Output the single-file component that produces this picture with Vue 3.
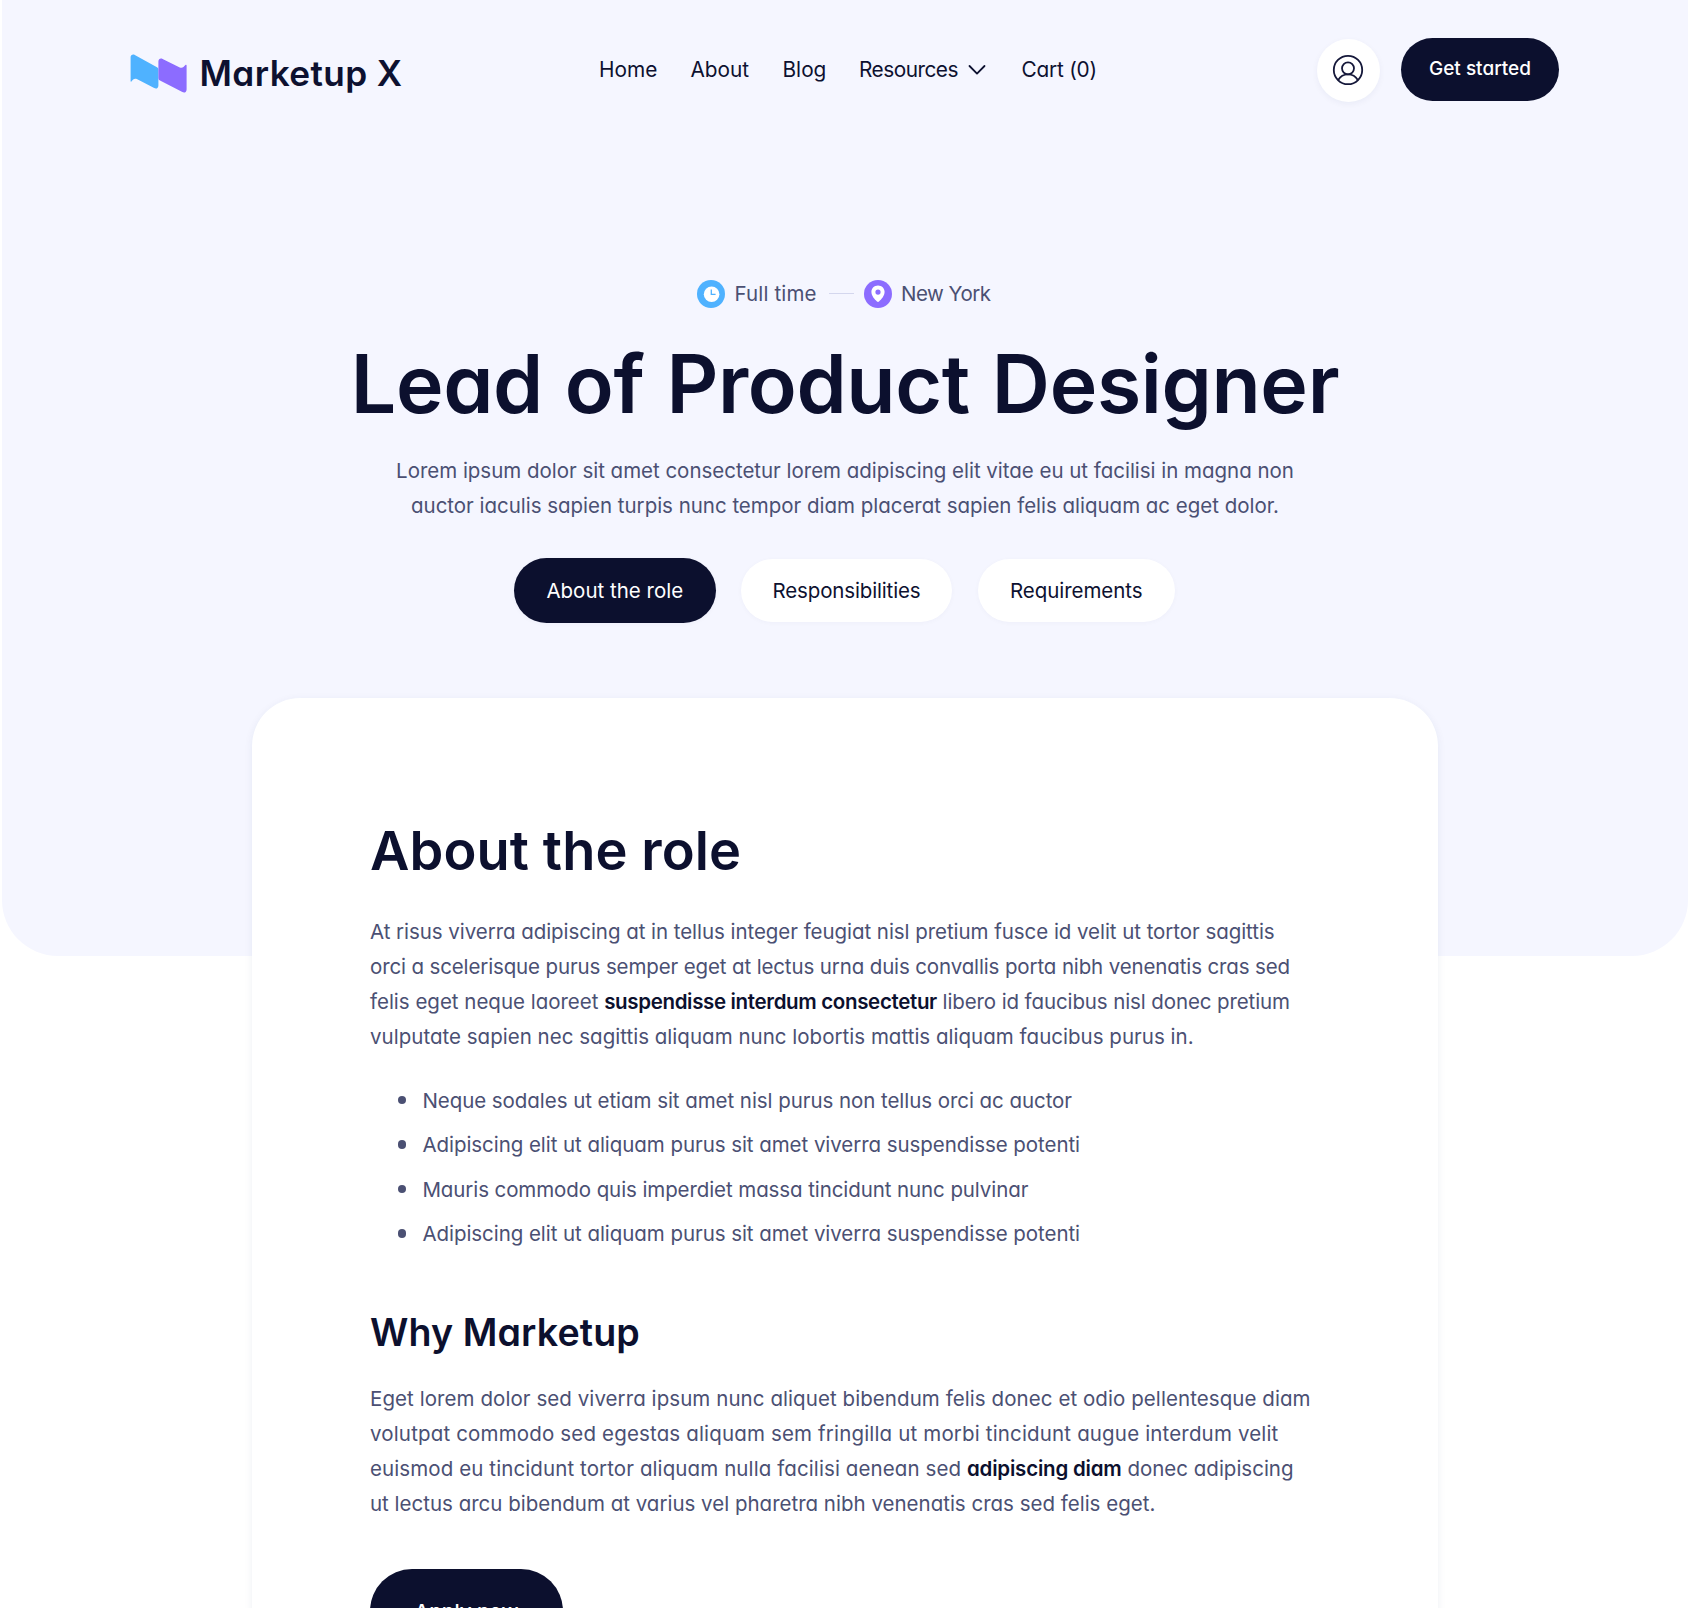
<script setup>
const nav = [
  { label: 'Home', cls: 'home' },
  { label: 'About', cls: 'about' },
  { label: 'Blog', cls: 'blog' },
  { label: 'Resources', cls: 'resources', menu: true },
  { label: 'Cart (0)', cls: 'cart' },
]

const tabs = [
  { label: 'About the role', cls: 'active' },
  { label: 'Responsibilities', cls: 'resp' },
  { label: 'Requirements', cls: 'req' },
]

// Each line is a list of runs; `ls` is the tracking in pixels.
const intro = [
  [{ t: 'At risus viverra adipiscing at in tellus integer feugiat nisl pretium fusce id velit ut tortor sagittis', ls: -0.05 }],
  [{ t: 'orci a scelerisque purus semper eget at lectus urna duis convallis porta nibh venenatis cras sed', ls: -0.13 }],
  [
    { t: 'felis eget neque laoreet ', ls: -0.01 },
    { t: 'suspendisse interdum consectetur', b: true, ls: -0.34 },
    { t: ' libero id faucibus nisl donec pretium', ls: -0.11 },
  ],
  [{ t: 'vulputate sapien nec sagittis aliquam nunc lobortis mattis aliquam faucibus purus in.', ls: 0.02 }],
]

const points = [
  { t: 'Neque sodales ut etiam sit amet nisl purus non tellus orci ac auctor', ls: -0.055 },
  { t: 'Adipiscing elit ut aliquam purus sit amet viverra suspendisse potenti', ls: -0.055 },
  { t: 'Mauris commodo quis imperdiet massa tincidunt nunc pulvinar', ls: -0.09 },
  { t: 'Adipiscing elit ut aliquam purus sit amet viverra suspendisse potenti', ls: -0.055 },
]

const why = [
  [{ t: 'Eget lorem dolor sed viverra ipsum nunc aliquet bibendum felis donec et odio pellentesque diam', ls: 0.07 }],
  [{ t: 'volutpat commodo sed egestas aliquam sem fringilla ut morbi tincidunt augue interdum velit', ls: 0.16 }],
  [
    { t: 'euismod eu tincidunt tortor aliquam nulla facilisi aenean sed ', ls: 0.1 },
    { t: 'adipiscing diam', b: true, ls: -0.2 },
    { t: ' donec adipiscing', ls: 0 },
  ],
  [{ t: 'ut lectus arcu bibendum at varius vel pharetra nibh venenatis cras sed felis eget.', ls: 0 }],
]
</script>

<template>
  <div class="page">
    <section class="hero">
      <header class="header">
        <a class="logo">
          <svg width="57" height="40" viewBox="0 0 57 40">
            <path fill="#4fb2ff" d="M0.6 3.2C0.6 1 2.8 0 4.8 1L27 13.2C28 13.8 28.4 14.6 28.4 15.8V31.4C28.4 34 26.4 35.2 24.2 34.1L6.8 25.1C4.5 24 2.8 25.5 1.4 27.4C1 28 0.6 27.8 0.6 27.1Z" />
            <path fill="#8c6cff" d="M28.4 7.4C28.4 4.8 30.6 3.8 32.6 4.9L49.8 13.4C52.2 14.6 53.7 13 55.4 11C56 10.4 56.6 10.6 56.6 11.4V35.4C56.6 38 54.5 39.3 52.4 38.1L30 26.6C28.9 26 28.4 25.2 28.4 24Z" />
          </svg>
          <span>Marketup X</span>
        </a>
        <nav class="nav">
          <a v-for="n in nav" :key="n.label" :class="n.cls">
            {{ n.label }}
            <svg v-if="n.menu" width="18" height="12" viewBox="0 0 18 12">
              <path d="M1.5 2L9 9.6L16.5 2" fill="none" stroke="#0d1130" stroke-width="1.8" stroke-linecap="round" stroke-linejoin="round" />
            </svg>
          </a>
        </nav>
        <div class="actions">
          <a class="user">
            <svg width="32" height="32" viewBox="0 0 32 32" fill="none" stroke="#15183a" stroke-width="1.8">
              <circle cx="16" cy="16" r="14.2" />
              <circle cx="16" cy="14.3" r="6" />
              <path d="M6.2 26C8.2 22.4 11.8 20.3 16 20.3S23.8 22.4 25.8 26" />
            </svg>
          </a>
          <a class="start">Get started</a>
        </div>
      </header>

      <div class="meta">
        <svg width="28" height="28" viewBox="0 0 28 28">
          <circle cx="14" cy="14" r="14" fill="#4fb2ff" />
          <circle cx="14.6" cy="14.2" r="7.8" fill="#fff" />
          <path d="M14.3 9.6V14.3H18.6" fill="none" stroke="#4fb2ff" stroke-width="1.3" />
        </svg>
        <span class="full">Full time</span>
        <i class="dash"></i>
        <svg width="28" height="28" viewBox="0 0 28 28">
          <circle cx="14" cy="14" r="14" fill="#8c6cff" />
          <path fill="#fff" fill-rule="evenodd" d="M14 5.4C10.2 5.4 7.4 8.2 7.4 11.8C7.4 16 10.7 19.4 13 21.5C13.6 22.1 14.4 22.1 15 21.5C17.3 19.4 20.6 16 20.6 11.8C20.6 8.2 17.8 5.4 14 5.4ZM14 14.7A2.6 2.6 0 1 1 14 9.5A2.6 2.6 0 0 1 14 14.7Z" />
        </svg>
        <span class="city">New York</span>
      </div>

      <h1>Lead of Product Designer</h1>
      <p class="lead">
        Lorem ipsum dolor sit amet consectetur lorem adipiscing elit vitae eu ut facilisi in magna non<br />
        auctor iaculis sapien turpis nunc tempor diam placerat sapien felis aliquam ac eget dolor.
      </p>

      <div class="tabs">
        <a v-for="t in tabs" :key="t.label" class="tab" :class="t.cls">{{ t.label }}</a>
      </div>
    </section>

    <article class="card">
      <h2>About the role</h2>
      <p>
        <span v-for="(line, i) in intro" :key="i" class="line"><component
          :is="r.b ? 'strong' : 'span'" v-for="(r, j) in line" :key="j"
          :style="{ letterSpacing: r.ls + 'px' }">{{ r.t }}</component></span>
      </p>
      <ul>
        <li v-for="(p, i) in points" :key="i" :style="{ letterSpacing: p.ls + 'px' }">{{ p.t }}</li>
      </ul>
      <h3>Why Marketup</h3>
      <p>
        <span v-for="(line, i) in why" :key="i" class="line"><component
          :is="r.b ? 'strong' : 'span'" v-for="(r, j) in line" :key="j"
          :style="{ letterSpacing: r.ls + 'px' }">{{ r.t }}</component></span>
      </p>
      <a class="apply">Apply now</a>
    </article>
  </div>
</template>

<style>
body {
  background: #fff;
}
</style>

<style scoped>
.page {
  box-sizing: border-box;
  height: 1608px;
  overflow: hidden;
  padding-left: 2px;
  font-family: Inter, 'Liberation Sans', sans-serif;
  font-feature-settings: 'cv11';
  font-size: 20.5px;
  line-height: 35.15px;
  color: #4b5073;
}
h1, h2, h3, p, ul {
  margin: 0;
  padding: 0;
}
.hero {
  height: 955.5px;
  border-radius: 0 0 56px 56px;
  background: #f5f6ff;
}
.header {
  display: flex;
  align-items: center;
  height: 139px;
  padding: 0 129px 0 128px;
  color: #0d1130;
}
.logo {
  display: flex;
  align-items: center;
  width: 467px;
  font-size: 35.2px;
  font-weight: 600;
  letter-spacing: 0.4px;
}
.logo svg {
  margin: 8px 12.5px 0 0;
}
.logo span {
  margin-top: 8px;
}
.nav {
  display: flex;
  flex: 1;
  font-size: 20.8px;
}
.nav a {
  white-space: nowrap;
}
.nav .home { margin-left: 2px; width: 91.5px; }
.nav .about { width: 92px; }
.nav .blog { width: 76.5px; }
.nav .resources {
  display: flex;
  align-items: center;
  width: 162.5px;
  letter-spacing: -0.5px;
}
.nav .resources svg {
  margin-left: 10px;
}
.nav .cart { letter-spacing: -0.2px; }
.actions {
  display: flex;
  align-items: center;
  gap: 21.5px;
}
.user {
  display: flex;
  align-items: center;
  justify-content: center;
  width: 63px;
  height: 63px;
  margin-top: 1px;
  border-radius: 50%;
  background: #fff;
  box-shadow: 0 2px 6px rgba(20, 30, 90, 0.05);
}
.start {
  box-sizing: border-box;
  width: 158px;
  height: 63px;
  border-radius: 32px;
  background: #0c102e;
  color: #fff;
  font-size: 19px;
  font-weight: 500;
  line-height: 62.5px;
  text-align: center;
}
.meta {
  display: flex;
  align-items: center;
  height: 28px;
  margin: 140.5px 0 0 695px;
}
.meta span {
  white-space: nowrap;
}
.full {
  width: 94.5px;
  margin-left: 9.5px;
  letter-spacing: 0.15px;
}
.dash {
  width: 25px;
  height: 1.5px;
  margin-right: 10px;
  background: #d4d7ee;
}
.city {
  margin-left: 9px;
  letter-spacing: -0.5px;
}
h1 {
  margin-top: 26px;
  color: #0c102e;
  font-size: 80.5px;
  font-weight: 600;
  line-height: 100px;
  letter-spacing: -0.35px;
  word-spacing: 2px;
  text-align: center;
}
.lead {
  margin-top: 19.7px;
  letter-spacing: -0.02px;
  text-align: center;
}
.tabs {
  display: flex;
  align-items: center;
  gap: 26px;
  margin: 34px 0 0 511.5px;
}
.tab {
  width: 211px;
  height: 63px;
  border-radius: 32px;
  background: #fff;
  box-shadow: 0 1px 5px rgba(20, 30, 90, 0.03);
  color: #0d1130;
  line-height: 63px;
  text-align: center;
  white-space: nowrap;
}
.tab.active {
  width: 202.5px;
  height: 65.5px;
  margin-right: -1px;
  border-radius: 33px;
  background: #0c102e;
  color: #fff;
  line-height: 65.5px;
}
.resp { letter-spacing: -0.15px; }
.req { width: 196.5px; letter-spacing: -0.05px; }
.card {
  box-sizing: border-box;
  width: 1185.5px;
  height: 1000px;
  margin: -257.5px 0 0 250px;
  padding: 116.8px 118px 0;
  border-radius: 48px;
  background: #fff;
  box-shadow: 0 2px 9px rgba(20, 50, 120, 0.07);
}
h2 {
  color: #0c102e;
  font-size: 54.2px;
  font-weight: 600;
  line-height: 70px;
  letter-spacing: 0.1px;
}
h2 + p {
  margin-top: 28.8px;
}
.line {
  display: block;
  white-space: pre;
}
strong {
  color: #0c102e;
  font-weight: 600;
}
ul {
  display: flex;
  flex-direction: column;
  gap: 9.35px;
  margin-top: 28.4px;
  list-style: none;
}
li {
  display: flex;
  align-items: center;
  white-space: nowrap;
}
li::before {
  content: '';
  width: 8.4px;
  height: 8.4px;
  margin: 0 16px 0 28px;
  border-radius: 50%;
  background: #4b5073;
}
h3 {
  margin-top: 57px;
  color: #0c102e;
  font-size: 37.6px;
  font-weight: 600;
  line-height: 50px;
  letter-spacing: 0.12px;
}
h3 + p {
  margin-top: 22.6px;
}
.apply {
  display: block;
  width: 193px;
  height: 84px;
  margin-top: 47.4px;
  border-radius: 42px;
  background: #0c102e;
  color: #fff;
  font-weight: 500;
  line-height: 85px;
  text-align: center;
}
</style>
